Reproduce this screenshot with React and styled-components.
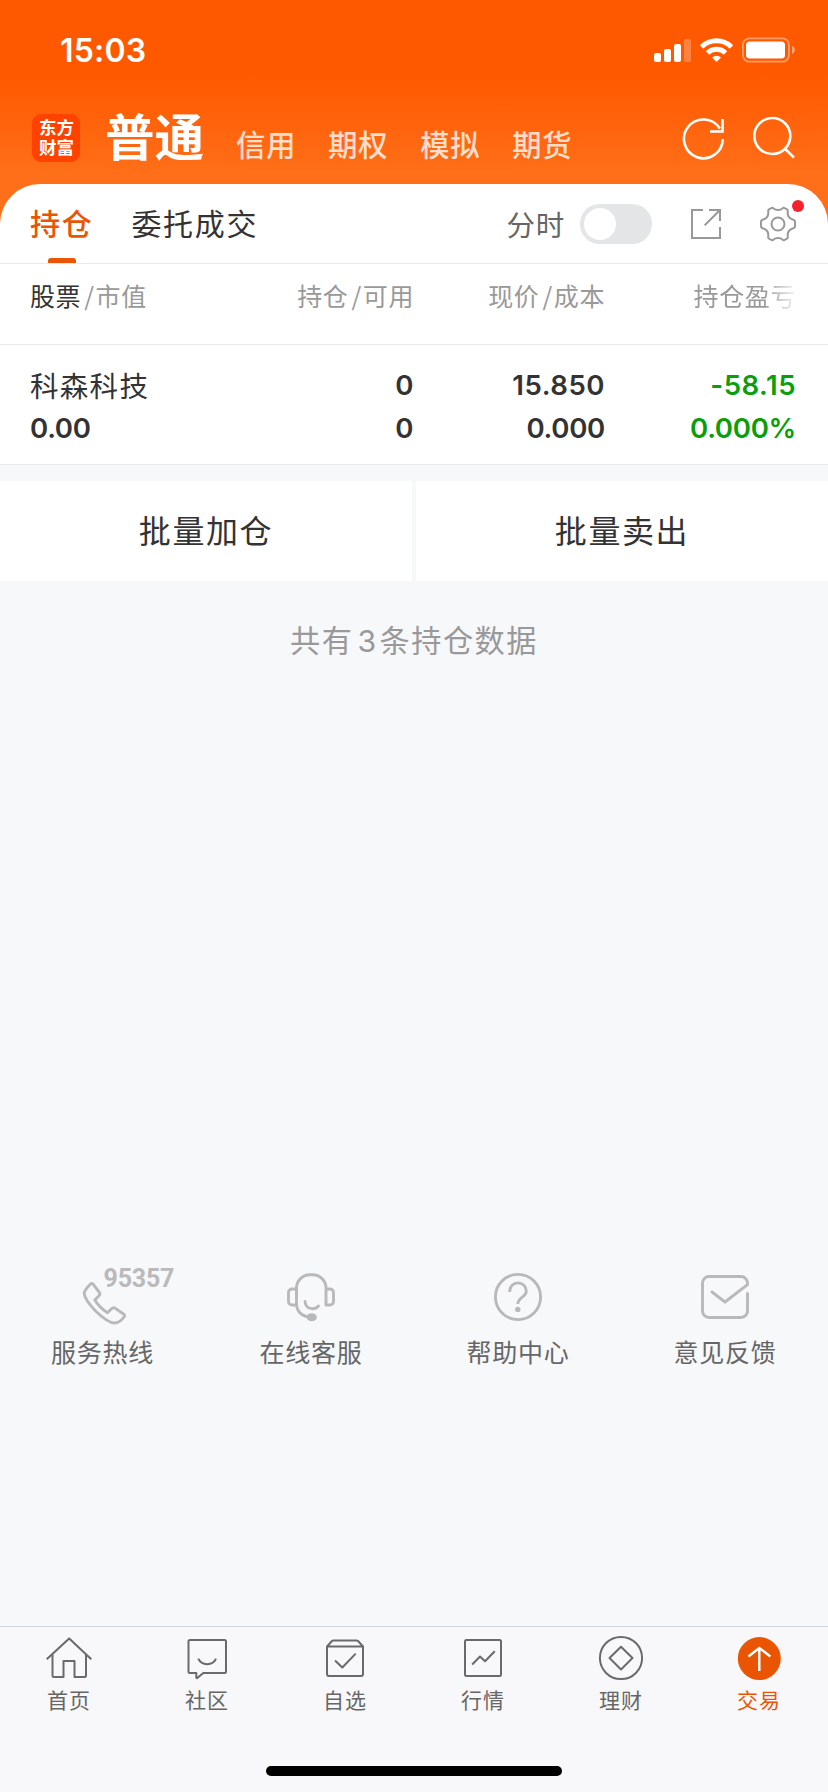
import React from "react";
import styled, { createGlobalStyle } from "styled-components";

const CJK = '"Noto Sans CJK SC", sans-serif';
const NUM = 'Inter, "Noto Sans CJK SC", sans-serif';

const GlobalStyle = createGlobalStyle`
  * { box-sizing: border-box; }
  body { margin: 0; background: #f7f8fa; font-family: ${CJK}; color: #333; }
`;

const Screen = styled.div`
  width: 828px;
  height: 1792px;
  display: flex;
  flex-direction: column;
  overflow: hidden;
  background: linear-gradient(#ff5900 0, #ff5900 76px, #ff6e18 172px, #ff701a 240px, #f7f8fa 240px);
`;

const StatusBar = styled.div`
  height: 100px;
  padding: 0 33px 0 60px;
  display: flex;
  align-items: center;
  flex-shrink: 0;
  color: #fff;
`;

const Clock = styled.div`
  flex: 1;
  padding-top: 1px;
  font: 600 32px/40px ${NUM};
  letter-spacing: 0.2px;
`;

const StatusIcons = styled.div`
  display: flex;
  gap: 9px;
  align-items: center;
`;

const NavBar = styled.div`
  height: 84px;
  padding: 0 33px 0 32px;
  display: flex;
  align-items: flex-start;
  flex-shrink: 0;
`;

const Logo = styled.div`
  width: 48px;
  height: 48px;
  margin-top: 14px;
  padding-left: 1px;
  display: grid;
  grid-template-rows: 20px 20px;
  align-content: center;
  padding-bottom: 2px;
  border-radius: 9px;
  background: #ff4200;
  color: #fff;
  font: 700 17.5px/20px ${CJK};
  text-align: center;
`;

const AccountTabs = styled.div`
  flex: 1;
  margin-left: 25px;
  display: flex;
  align-items: baseline;
  height: 84px;
`;

const AccountTab = styled.div`
  font-family: ${CJK};
  font-size: ${(p) => (p.$active ? 49.5 : 29.5)}px;
  line-height: 69px;
  letter-spacing: ${(p) => (p.$active ? 0 : 0.5)}px;
  font-weight: ${(p) => (p.$active ? 700 : 500)};
  color: ${(p) => (p.$active ? "#fff" : "rgba(255,255,255,.8)")};
  margin-right: 32px;
`;

const NavActions = styled.div`
  display: flex;
  gap: 26px;
  margin-top: 16px;
`;

const Panel = styled.div`
  background: #fff;
  border-radius: 40px 40px 0 0;
  flex-shrink: 0;
`;

const ViewBar = styled.div`
  height: 80px;
  padding: 0 32px 0 30px;
  display: flex;
  align-items: center;
  border-bottom: 1px solid #e9e9eb;
`;

const ViewTab = styled.div`
  position: relative;
  height: 79px;
  margin-right: 38px;
  font-size: 30px;
  line-height: 77px;
  letter-spacing: 1.7px;
  font-weight: ${(p) => (p.$active ? 500 : 400)};
  color: ${(p) => (p.$active ? "#ea5504" : "#333")};
`;

const TabMarker = styled.span`
  position: absolute;
  left: 18px;
  bottom: 0;
  width: 28px;
  height: 5px;
  border-radius: 3px 3px 0 0;
  background: #ea5504;
`;

const ViewTools = styled.div`
  flex: 1;
  display: flex;
  align-items: center;
  justify-content: flex-end;
`;

const ToolLabel = styled.span`
  font-size: 28.5px;
  line-height: 77px;
  letter-spacing: 0.8px;
  color: #666;
  margin-right: 15px;
`;

const Toggle = styled.span`
  width: 72px;
  height: 40px;
  padding: 4px;
  border-radius: 20px;
  background: #e4e5e7;
  margin-right: 38px;

  &::before {
    content: "";
    display: block;
    width: 32px;
    height: 32px;
    border-radius: 50%;
    background: #fff;
  }
`;

const SettingsButton = styled.span`
  position: relative;
  display: flex;
  margin-left: 36px;
`;

const Dot = styled.span`
  position: absolute;
  width: 12px;
  height: 12px;
  right: -8px;
  top: -6px;
  border-radius: 50%;
  background: #f5222d;
`;

const Row = styled.div`
  display: grid;
  grid-template-columns: 201px 183px 191px 191px;
  padding: ${(p) => (p.$head ? "13px 0 0 30px" : "19px 0 0 30px")};
  height: ${(p) => (p.$head ? 81 : 120)}px;
  border-bottom: 1px solid #e9e9eb;
`;

const HeadCell = styled.div`
  display: flex;
  justify-content: ${(p) => (p.$left ? "flex-start" : "flex-end")};
  font-size: 25px;
  line-height: 36px;
  letter-spacing: 0.6px;
  color: #999;
  white-space: nowrap;
  ${(p) =>
    p.$fade &&
    "-webkit-mask-image: linear-gradient(90deg, #000 158px, transparent 195px); mask-image: linear-gradient(90deg, #000 158px, transparent 195px);"}
`;

const Strong = styled.span`
  color: #333;
  font-weight: 400;
`;

const Slash = styled.span`
  margin: 0 1px 0 3px;
`;

const Cell = styled.div`
  display: flex;
  flex-direction: column;
  align-items: ${(p) => (p.$left ? "flex-start" : "flex-end")};
  color: ${(p) => (p.$loss ? "#0a9f0a" : "#333")};
`;

const StockName = styled.div`
  font-size: 28.5px;
  line-height: 41px;
  padding-bottom: 2px;
  letter-spacing: 1.3px;
`;

const Value = styled.div`
  font: 600 27.6px/43px ${NUM};
  letter-spacing: ${(p) => (p.$tight ? -0.3 : 0.5)}px;
`;

const BatchActions = styled.div`
  display: grid;
  grid-template-columns: 1fr 1fr;
  gap: 4px;
  padding-top: 16px;
  background: #f7f8fa;
  flex-shrink: 0;
`;

const BatchButton = styled.button`
  height: 100px;
  border: 0;
  padding: 0 0 4px 0;
  background: #fff;
  color: #333;
  font: 400 32px/48px ${CJK};
  letter-spacing: 1.6px;
`;

const Summary = styled.div`
  flex: 1;
  background: #f7f8fa;
  padding-top: 36px;
  text-align: center;
  font-size: 30.2px;
  line-height: 44px;
  letter-spacing: 1.5px;
  color: #999;
`;

const Count = styled.span`
  font-family: Inter, sans-serif;
  margin: 0 2px 0 4px;
`;

const Services = styled.div`
  display: grid;
  grid-template-columns: repeat(4, 207px);
  padding-left: 0.5px;
  height: 353px;
  background: #f7f8fa;
  flex-shrink: 0;
`;

const Service = styled.div`
  position: relative;
  display: flex;
  flex-direction: column;
  align-items: center;
  font-size: 25px;
  line-height: 36px;
  letter-spacing: 0.7px;
  color: #666;
`;

const ServiceLabel = styled.span`
  margin-right: ${(p) => (p.$hotline ? 3 : 0)}px;
`;

const ServiceIcon = styled.svg.attrs({ viewBox: "0 0 48 48" })`
  width: 48px;
  height: 48px;
  overflow: visible;
  fill: none;
  stroke: #b9b9b9;
  stroke-width: 2.9;
  stroke-linecap: round;
  stroke-linejoin: round;
  margin-bottom: 12px;
`;

const Hotline = styled.span`
  position: absolute;
  left: 103px;
  top: -7px;
  font: 700 25px/26px Roboto, sans-serif;
  letter-spacing: -0.2px;
  color: #bababa;
`;

const BottomBar = styled.div`
  height: 166px;
  display: flex;
  flex-direction: column;
  align-items: center;
  justify-content: space-between;
  background: #f8f8fa;
  border-top: 1px solid #d2d6de;
  padding-bottom: 16px;
  flex-shrink: 0;
`;

const BottomTabs = styled.div`
  display: grid;
  grid-template-columns: repeat(6, 138px);
`;

const BottomTab = styled.div`
  display: flex;
  flex-direction: column;
  align-items: center;
  padding-top: 7px;
  font-size: 21px;
  line-height: 34px;
  letter-spacing: 0.9px;
  color: ${(p) => (p.$active ? "#ea5504" : "#666")};
`;

const TabIcon = styled.svg.attrs({ viewBox: "0 0 48 48" })`
  width: 48px;
  height: 48px;
  fill: none;
  stroke: #6a6a6c;
  stroke-width: 2;
  stroke-linejoin: round;
`;

const HomeIndicator = styled.div`
  width: 296px;
  height: 10px;
  border-radius: 5px;
  background: #000;
`;

const services = [
  {
    label: "服务热线",
    extra: "95357",
    icon: (
      <path d="M10 11.5Q11.7 9.3 13.3 11.3L19.3 19.3Q20.6 21.2 19 22.8L14.8 27Q20 35 27.5 39.8L31.5 35.8Q33.2 34.1 35 35.1L43.5 41Q45.5 42.5 44 44Q39.5 50 34.5 50Q28 50 15.5 38Q4.5 26.5 4.2 20.3Q4.2 17.5 10 11.5Z" />
    ),
  },
  {
    label: "在线客服",
    icon: (
      <>
        <path d="M39 32V15A13.5 13.3 0 0 0 25.5 1.7H23A13.5 13.3 0 0 0 9.5 15V30Q9.5 42 22 44M9.5 16H5A3.5 3.5 0 0 0 1.5 19.5V28.5A3.5 3.5 0 0 0 5 32H9.5M39 16H43A3.5 3.5 0 0 1 46.5 19.5V28.5A3.5 3.5 0 0 1 43 32H39M18 28.5Q18.5 35.2 25.5 35.8Q29 35.8 31.5 33" />
        <ellipse cx="24.7" cy="44.3" rx="3.7" ry="2.5" fill="#b9b9b9" />
      </>
    ),
  },
  {
    label: "帮助中心",
    icon: (
      <>
        <circle cx="24" cy="24" r="22.6" />
        <path strokeLinecap="butt" d="M15.7 19V18.2A8.3 8.3 0 0 1 32.3 18.2C32.3 24 23.8 24.5 23.8 31" />
        <circle cx="23.8" cy="36.4" r="2.7" fill="#b9b9b9" stroke="none" />
      </>
    ),
  },
  {
    label: "意见反馈",
    icon: (
      <path d="M46.5 20.5V38A6.5 6.5 0 0 1 40 44.5H8A6.5 6.5 0 0 1 1.5 38V10A6.5 6.5 0 0 1 8 3.5H40A6.5 6.5 0 0 1 46.5 10V11.7L24 29L11 19" />
    ),
  },
];

const bottomTabs = [
  {
    label: "首页",
    icon: (
      <path d="M1.7 25.3L24.2 4.4L46.3 25.3M7.5 20.5V41.5Q7.5 43 9 43H18.5V27H29.5V43H39.5Q41 43 41 41.5V20.5" />
    ),
  },
  {
    label: "社区",
    icon: (
      <path d="M7 6H41.5Q43 6 43 7.5V37.5Q43 39 41.5 39H20.3L14 44.3Q13.3 44.3 13.3 43.5V39H7Q5.5 39 5.5 37.5V7.5Q5.5 6 7 6ZM15.3 24.7C18.5 32 30 32 33 24.7" />
    ),
  },
  {
    label: "自选",
    icon: (
      <path d="M6 12.5H42V40Q42 42 40 42H8Q6 42 6 40V12.5L11 7Q11.5 6.5 12.5 6.5H35.5Q36.5 6.5 37 7L42 12.5M14 26.5L21.3 33.5L34.7 19.6" />
    ),
  },
  {
    label: "行情",
    icon: (
      <>
        <rect x="6" y="6" width="36" height="36" rx="1.5" />
        <path d="M13.2 30.5L21 22.5L26 27.3L35.8 17.3" />
      </>
    ),
  },
  {
    label: "理财",
    icon: (
      <>
        <circle cx="24" cy="24" r="21.1" />
        <path d="M24 12.7L35.5 24L24 35.5L12.5 24Z" />
      </>
    ),
  },
  {
    label: "交易",
    active: true,
    icon: (
      <>
        <circle cx="24.3" cy="24.6" r="21.5" fill="#ea5504" stroke="none" />
        <path stroke="#fff" strokeWidth="2.4" strokeLinejoin="miter" d="M24.3 37V14.5M13.4 22.5L24.3 14L35.4 22.5" />
      </>
    ),
  },
];

function SignalIcon() {
  return (
    <svg width="37" height="26" fill="#fff">
      <rect y="16" width="7" height="9" rx="2" />
      <rect x="10" y="12" width="7" height="13" rx="2" />
      <rect x="20" y="7" width="7" height="18" rx="2" />
      <rect x="30" y="2" width="7" height="23" rx="2" opacity=".25" />
    </svg>
  );
}

function WifiIcon() {
  return (
    <svg width="33" height="26" fill="none" stroke="#fff" strokeWidth="5">
      <path d="M1.5 10A21.3 21.3 0 0 1 31.5 10M7.5 16A12.8 12.8 0 0 1 25.5 16" />
      <path stroke="none" fill="#fff" d="M16.5 25L12 20.5A6.4 6.4 0 0 1 21 20.5Z" />
    </svg>
  );
}

function BatteryIcon() {
  return (
    <svg width="53" height="26" fill="none">
      <rect x="0.9" y="1.3" width="46" height="23.4" rx="6.5" stroke="#fff" strokeWidth="1.8" opacity=".42" />
      <rect x="4" y="4.5" width="39" height="17" rx="3.5" fill="#fff" />
      <path d="M50 8.8Q53 10.2 53 13T50 17.2Z" fill="#fff" opacity=".45" />
    </svg>
  );
}

function GearIcon() {
  return (
    <svg width="36" height="36" fill="none" stroke="#999" strokeWidth="2" strokeLinejoin="round">
      <path d="M18 4Q21 4 22.5 2.4Q23.3 1.5 24.5 2L27 3.4Q28 4 27.8 5.2Q27 11 31.5 13Q35 14 35 15.8V20.2Q35 22 31.5 23Q27 25 27.8 30.8Q28 32 27 32.6L24.5 34Q23.3 34.5 22.5 33.6Q21 32 18 32Q15 32 13.5 33.6Q12.7 34.5 11.5 34L9 32.6Q8 32 8.2 30.8Q9 25 4.5 23Q1 22 1 20.2V15.8Q1 14 4.5 13Q9 11 8.2 5.2Q8 4 9 3.4L11.5 2Q12.7 1.5 13.5 2.4Q15 4 18 4Z" />
      <circle cx="18" cy="18" r="6.5" />
    </svg>
  );
}

export default function App() {
  return (
    <>
      <GlobalStyle />
      <Screen>
        <StatusBar>
          <Clock>15:03</Clock>
          <StatusIcons>
            <SignalIcon />
            <WifiIcon />
            <BatteryIcon />
          </StatusIcons>
        </StatusBar>
        <NavBar>
          <Logo>
            <span>东方</span>
            <span>财富</span>
          </Logo>
          <AccountTabs>
            <AccountTab $active>普通</AccountTab>
            <AccountTab>信用</AccountTab>
            <AccountTab>期权</AccountTab>
            <AccountTab>模拟</AccountTab>
            <AccountTab>期货</AccountTab>
          </AccountTabs>
          <NavActions>
            <svg width="44" height="44" fill="none" stroke="#fff" strokeWidth="2.6">
              <path d="M41.8 23A19.4 19.4 0 1 1 38.8 12.5M41.5 3V15.5H29" />
            </svg>
            <svg width="44" height="44" fill="none" stroke="#fff" strokeWidth="2.6">
              <circle cx="21.3" cy="20" r="18" />
              <path d="M34 32.8L43 41.6" />
            </svg>
          </NavActions>
        </NavBar>
        <Panel>
          <ViewBar>
            <ViewTab $active>
              持仓
              <TabMarker />
            </ViewTab>
            <ViewTab>委托成交</ViewTab>
            <ViewTools>
              <ToolLabel>分时</ToolLabel>
              <Toggle />
              <svg width="34" height="34" fill="none" stroke="#999" strokeWidth="2">
                <path d="M13 3H2V31H30V20M19 3H30V14M30 3L14.7 18.3" />
              </svg>
              <SettingsButton>
                <GearIcon />
                <Dot />
              </SettingsButton>
            </ViewTools>
          </ViewBar>
          <Row $head>
            <HeadCell $left>
              <Strong>股票</Strong>
              <Slash>/</Slash>市值
            </HeadCell>
            <HeadCell>
              持仓<Slash>/</Slash>可用
            </HeadCell>
            <HeadCell>
              现价<Slash>/</Slash>成本
            </HeadCell>
            <HeadCell $fade>持仓盈亏</HeadCell>
          </Row>
          <Row>
            <Cell $left>
              <StockName>科森科技</StockName>
              <Value $tight>0.00</Value>
            </Cell>
            <Cell>
              <Value>0</Value>
              <Value>0</Value>
            </Cell>
            <Cell>
              <Value>15.850</Value>
              <Value $tight>0.000</Value>
            </Cell>
            <Cell $loss>
              <Value>-58.15</Value>
              <Value $tight>0.000%</Value>
            </Cell>
          </Row>
        </Panel>
        <BatchActions>
          <BatchButton>批量加仓</BatchButton>
          <BatchButton>批量卖出</BatchButton>
        </BatchActions>
        <Summary>
          共有<Count>3</Count>条持仓数据
        </Summary>
        <Services>
          {services.map((s) => (
            <Service key={s.label}>
              <ServiceIcon>{s.icon}</ServiceIcon>
              {s.extra && <Hotline>{s.extra}</Hotline>}
              <ServiceLabel $hotline={Boolean(s.extra)}>{s.label}</ServiceLabel>
            </Service>
          ))}
        </Services>
        <BottomBar>
          <BottomTabs>
            {bottomTabs.map((t) => (
              <BottomTab key={t.label} $active={t.active}>
                <TabIcon>{t.icon}</TabIcon>
                {t.label}
              </BottomTab>
            ))}
          </BottomTabs>
          <HomeIndicator />
        </BottomBar>
      </Screen>
    </>
  );
}
